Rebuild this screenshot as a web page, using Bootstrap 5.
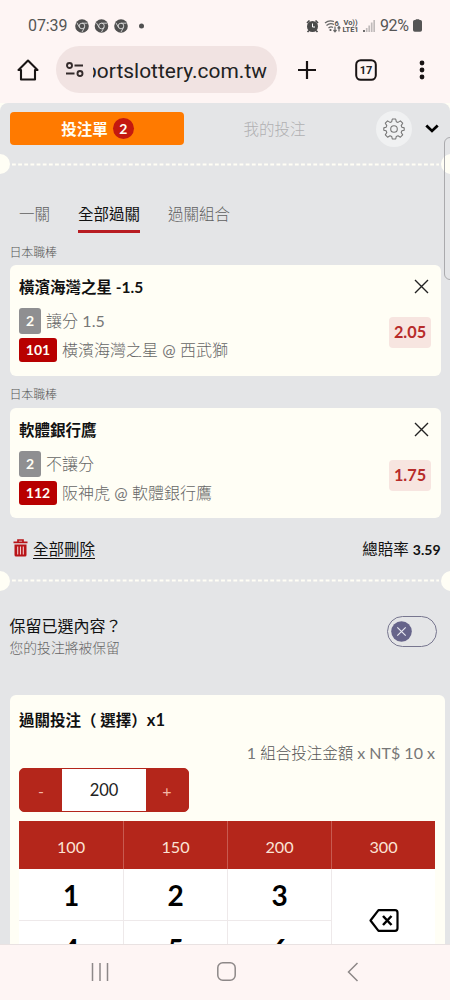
<!DOCTYPE html>
<html lang="zh-Hant">
<head>
<meta charset="utf-8">
<meta name="viewport" content="width=device-width, initial-scale=1">
<title>投注單</title>
<link href="https://cdn.jsdelivr.net/npm/bootstrap@5.3.0/dist/css/bootstrap.min.css" rel="stylesheet">
<style>
html,body{height:1000px;overflow:hidden}
body{font-family:Lato,"Noto Sans CJK TC",sans-serif;background:#fef5f4;color:#111;font-size:15.5px;width:450px}
svg{display:block;flex:none}
.chrome-font{font-family:Roboto,sans-serif}
.statusbar{height:48px;padding:3px 27px 0 28px;color:#555;font-size:16px}
.volte{font-size:7.5px;line-height:7px;font-weight:700;text-align:center;letter-spacing:-.1px}
.urlbar{height:55px;padding:0 15px 12px 17px}
.omni{width:221px;height:47px;background:#f1e3e2;border-radius:24px;padding:0 10px 0 10px;color:#222;font-size:20.9px;overflow:hidden}
.omni-text{width:174px;height:30px;line-height:33px;overflow:hidden;direction:rtl;white-space:nowrap;letter-spacing:.03px}
.slip{height:841px;background:#e4e5e7;border-radius:8px 8px 0 0;overflow:hidden;position:relative}
.slip-wrap{background:#fffef5}
.slip-head{height:51px;padding:0 9px 0 9.5px}
.tab-main{width:174px;height:33px;background:#ff7a00;border-radius:4px;color:#fffef5;font-weight:700}
.count{width:21px;height:21px;border-radius:50%;background:#c4190f;font-size:14px;line-height:21px;text-align:center;font-weight:700}
.tab-other{width:182px;color:#b0b0b2;font-weight:300;padding-top:1px}
.gear{width:36px;height:36px;border-radius:50%;background:#f0f1f2}
.perf{height:20px;margin:0 -11px 0 -10px}
.perf i{width:20px;height:20px;border-radius:50%;background:#fffef5;flex:none}
.perf svg{flex:1 1 0;min-width:0}
.modes{height:66px;padding:30px 19px 0;gap:28px;color:#606060;font-weight:300}
.modes span{height:36px;line-height:32px;white-space:nowrap}
.modes .on{color:#111;font-weight:400;border-bottom:3.5px solid #b81c22;height:35px}
.league{font-size:12px;letter-spacing:-.15px;color:#555;font-weight:300;padding-left:9.5px;height:19px;line-height:20px}
.pick{width:431.5px;height:110.5px;margin-left:9.5px;background:#fffef5;border-radius:6px;padding:9px 10px 0 9.5px}
.pick-title{font-weight:700;color:#111;line-height:26px;height:34px}
.pick-line{color:#666;font-size:16px;font-weight:300;white-space:nowrap}
.pick-line .rg{font-weight:400;color:#777}
.tag{border-radius:3px;color:#fffef5;font-size:14px;font-weight:700;text-align:center}
.tag-g{background:#8f8f91;width:22px;height:26px;line-height:26px}
.tag-r{background:#b80000;width:38px;height:24px;line-height:24px}
.odd{width:42px;height:31px;line-height:30px;background:#f7e5e0;border-radius:4px;color:#b72c2a;font-weight:700;font-size:16.300px;text-align:center}
.sum{height:52.5px;padding:10px 9.5px 0 13px}
.del{text-decoration:underline;text-underline-offset:3px;text-decoration-thickness:1px}
.keep{height:104.5px;padding:24px 13px 0 9.5px}
.switch-box{width:50px;height:31px;border:1px solid #77768f;border-radius:16px;padding-left:3px;margin-top:1px}
.stake{width:435px;height:330px;margin-left:9.5px;background:#fffef5;border-radius:6px 6px 0 0;padding:0 9.5px}
.stepper{width:170px;height:44px;border:1px solid #b4261b;border-radius:5px;background:#b4261b;line-height:43px;overflow:hidden;text-align:center}
.stepper .sg{width:42px;color:#f4b9a8;font-size:16px}
.stepper .num{flex:1;background:#fff;color:#222;font-size:16.5px}
.pad{display:grid;grid-template-columns:105px 104px 104px 103px;grid-template-rows:48px 52px 52px;width:416px;text-align:center;background:#fff}
.pad .q{background:#b4261b;color:#fbe3d5;line-height:52px;font-size:16.200px;border-right:1px solid #c85a50}
.pad .q:nth-child(4){border:0}
.pad .k{color:#000;font-size:28px;font-weight:700;line-height:53px;border-right:1px solid #eee9ea;border-bottom:1px solid #eee9ea}
.pad .bk{grid-row:span 2}
.pad .bk ~ .k{line-height:56px}
.handle{position:absolute;right:-6px;top:34px;width:12px;height:143px;border:1px solid #aaaaad;border-radius:6px;background:transparent}
.sysnav{height:56px;padding:0 91px 2px;border-top:1px solid #e9e2e2}
</style>
</head>
<body>
<div class="statusbar chrome-font d-flex align-items-center justify-content-between">
  <div class="d-flex align-items-center">
    <span style="width:47px;letter-spacing:-.1px">07:39</span>
    <svg width="72" height="16" viewBox="0 0 72 16">
      <defs><g id="chr"><circle cx="7" cy="8" r="6.800" fill="#505050"/><g stroke="#ddd" stroke-width=".9" fill="none"><circle cx="7" cy="8" r="2.800"/><path d="M7 5.200h5.500M4.600 9.500L1.900 4.800M9.500 9.400L7 14"/></g></g></defs>
      <use href="#chr"/><use href="#chr" x="19.500"/><use href="#chr" x="39"/><circle cx="66.500" cy="8" r="2.500" fill="#505050"/>
    </svg>
  </div>
  <div class="d-flex align-items-center">
    <svg style="margin-right:-1px" width="13" height="14" viewBox="0 0 13 14"><circle cx="6.500" cy="7.500" r="5.500" fill="#4a4a4a"/><path d="M1 4l2.500-2.500M12 4L9.500 1.500M3 11.500L1.500 13M10 11.500l1.500 1.500" stroke="#4a4a4a" stroke-width="1.700"/><path d="M6.500 4.500v3.500H9" stroke="#fff" fill="none"/></svg>
    <svg style="margin-left:6px" width="17" height="14" viewBox="0 0 17 14"><g fill="none" stroke="#666" stroke-width="1.200"><path d="M1 4Q5 .5 10 2.500M2.500 6.500Q6 3.500 10 5.500M4.500 9Q7 7 9 8.500"/><path d="M11 7.500v5M9.500 11l1.500 1.800 1.500-1.800M15 12.500v-5M13.600 9.300L15 7.500l1.400 1.800"/></g><circle cx="6.500" cy="11" r="1.100" fill="#555"/><text x="10.500" y="6.500" font-size="7.500" font-weight="700" fill="#555">6</text></svg>
    <span class="volte" style="margin-left:1px;width:17px">Vo))<br>LTE1</span>
    <svg class="mx-1" width="12" height="13" viewBox="0 0 12 13"><path d="M1 11v2" stroke="#555" stroke-width="1.700"/><path d="M3.700 9v4M6.200 6.500V13M8.700 3.500V13M11.200 1v12" stroke="#c0bbbb" stroke-width="1.700"/></svg>
    <span style="letter-spacing:-.4px;margin-left:1px;width:33px">92%</span>
    <svg style="margin-right:1px" width="9" height="13" viewBox="0 0 10 14"><path d="M3 0h4v1h1.200Q10 1 10 2.800V12q0 2-2 2H2q-2 0-2-2V2.800Q0 1 1.800 1H3z" fill="#555"/></svg>
  </div>
</div>
<div class="urlbar d-flex align-items-center">
  <svg width="22" height="24" viewBox="0 0 22 24" fill="none" stroke="#191414" stroke-width="2.100" stroke-linejoin="round"><path d="M1.500 12L11 2.500l9.500 9.500H18v9.500H4V12z"/></svg>
  <div class="omni chrome-font d-flex align-items-center" style="margin-left:17px">
    <svg width="20" height="18" viewBox="0 0 20 18" fill="none" stroke="#332b2b" stroke-width="1.900"><circle cx="3.500" cy="4.500" r="2.500"/><path d="M8.500 4.500H17M0 12.500h8.500"/><circle cx="14" cy="12.500" r="2.500"/></svg>
    <div class="omni-text" style="margin-left:7px"><bdi dir="ltr">sportslottery.com.tw</bdi></div>
  </div>
  <svg style="margin-left:20px" width="20" height="20" viewBox="0 0 20 20"><path d="M10 1v18M1 10h18" stroke="#191414" stroke-width="2.200"/></svg>
  <svg style="margin-left:38px" width="22" height="22" viewBox="0 0 22 22"><rect x="1.200" y="1.200" width="19.600" height="19.600" rx="4.500" fill="none" stroke="#191414" stroke-width="2"/><text x="11" y="15" text-anchor="middle" font-size="11" font-weight="700" font-family="Roboto" fill="#222">17</text></svg>
  <svg style="margin-left:42px" width="6" height="22" viewBox="0 0 6 22" fill="#191414"><circle cx="3" cy="4" r="2.400"/><circle cx="3" cy="11" r="2.400"/><circle cx="3" cy="18" r="2.400"/></svg>
</div>
<div class="slip-wrap"><main class="slip">
  <div class="slip-head d-flex align-items-center">
    <div class="tab-main d-flex align-items-center justify-content-center"><span style="padding:2px 0 0 2px">投注單</span><span class="count" style="margin-left:5px">2</span></div>
    <div class="tab-other text-center" style="padding-top:3px">我的投注</div>
    <div class="gear d-flex align-items-center justify-content-center" style="margin-left:10px"><svg width="22" height="22" viewBox="0 0 22 22" fill="none" stroke="#777" stroke-width="1.100" stroke-linejoin="round"><circle cx="11" cy="11" r="3.300"/><path d="M9.300 1h3.400l.6 2.700 1.700.7 2.400-1.500 2.300 2.300-1.500 2.400.7 1.700 2.300.6v2.300l-2.300.6-.7 1.700 1.500 2.400-2.300 2.300-2.400-1.500-1.700.7-.6 2.600H9.300l-.6-2.600-1.700-.7-2.400 1.500-2.300-2.300 1.500-2.400-.7-1.700L.8 12.200V9.900l2.300-.6.7-1.700-1.500-2.400 2.300-2.300L7 4.400l1.700-.7z"/></svg></div>
    <svg style="margin-left:13px" width="14" height="9" viewBox="0 0 14 9"><path d="M1.300 1.500L7 6.900l5.700-5.400" fill="none" stroke="#000" stroke-width="2.800"/></svg>
  </div>
  <div class="perf d-flex align-items-center"><i></i><svg height="3" width="428"><path d="M2 1.500h427" stroke="#fffef5" stroke-width="2.200" stroke-dasharray="3.800 2.350"/></svg><i></i></div>
  <div class="modes d-flex" style="margin-top:-6px"><span>一關</span><span class="on">全部過關</span><span>過關組合</span></div>
  <div class="league" style="margin-top:9px">日本職棒</div>
  <section class="pick" style="margin-top:3px">
    <div class="d-flex justify-content-between"><div class="pick-title">橫濱海灣之星 -1.5</div><svg style="margin:5px 2px 0 0" width="15" height="15" viewBox="0 0 15 15"><path d="M1 1l13 13M14 1L1 14" stroke="#222" stroke-width="1.400"/></svg></div>
    <div class="d-flex justify-content-between align-items-center" style="height:54px">
      <div><div class="pick-line d-flex align-items-center"><span class="tag tag-g">2</span><span style="margin-left:5px">讓分 <span class="rg">1.5</span></span></div>
      <div class="pick-line d-flex align-items-center" style="margin-top:4px"><span class="tag tag-r">101</span><span style="margin-left:5px">橫濱海灣之星 <span class="rg">@</span> 西武獅</span></div></div>
      <span class="odd" style="margin-top:-5px">2.05</span>
    </div>
  </section>
  <div class="league" style="margin-top:9.500px">日本職棒</div>
  <section class="pick" style="margin-top:3.500px">
    <div class="d-flex justify-content-between"><div class="pick-title">軟體銀行鷹</div><svg style="margin:5px 2px 0 0" width="15" height="15" viewBox="0 0 15 15"><path d="M1 1l13 13M14 1L1 14" stroke="#222" stroke-width="1.400"/></svg></div>
    <div class="d-flex justify-content-between align-items-center" style="height:54px">
      <div><div class="pick-line d-flex align-items-center"><span class="tag tag-g">2</span><span style="margin-left:5px">不讓分</span></div>
      <div class="pick-line d-flex align-items-center" style="margin-top:4px"><span class="tag tag-r">112</span><span style="margin-left:5px">阪神虎 <span class="rg">@</span> 軟體銀行鷹</span></div></div>
      <span class="odd" style="margin-top:-5px">1.75</span>
    </div>
  </section>
  <div class="sum d-flex align-items-center justify-content-between">
    <div class="d-flex align-items-center"><svg style="margin-top:-2px" width="15" height="18" viewBox="0 0 15 18"><path d="M.5 3.300h14M5 3V1h5v2" fill="none" stroke="#b81418" stroke-width="1.700"/><path d="M1.500 5.500h12V16q0 1.500-1.500 1.500H3Q1.500 17.500 1.500 16z" fill="#b81418"/><path d="M4.700 7.500v8M7.500 7.500v8M10.300 7.500v8" stroke="#f0cccd" stroke-width="1.100"/></svg><span class="del" style="margin-left:5px">全部刪除</span></div>
    <div>總賠率 <b style="font-size:14px">3.59</b></div>
  </div>
  <div class="perf d-flex align-items-center"><i></i><svg height="3" width="428"><path d="M2 1.500h427" stroke="#fffef5" stroke-width="2.200" stroke-dasharray="3.800 2.350"/></svg><i></i></div>
  <div class="keep d-flex justify-content-between">
    <div><div style="font-size:16px;line-height:22px">保留已選內容？</div><div style="font-size:13.800px;line-height:22px;color:#666;font-weight:300">您的投注將被保留</div></div>
    <div class="switch-box d-flex align-items-center"><svg width="21" height="21" viewBox="0 0 21 21"><circle cx="10.500" cy="10.500" r="10.300" fill="#66648a"/><path d="M6.300 6.300l8.400 8.400M14.700 6.300l-8.400 8.400" stroke="#e8e8f0" stroke-width="1.200"/></svg></div>
  </div>
  <section class="stake">
    <div class="fw-bold" style="height:42px;line-height:51px">過關投注（ 選擇）<span style="font-size:16.500px">x1</span></div>
    <div class="text-end" style="height:31px;line-height:31px;color:#777;font-size:16px"><span>1</span> <span style="font-weight:300;font-size:15.500px;color:#555">組合投注金額</span> x NT$ 10 x</div>
    <div class="stepper d-flex"><span class="sg">-</span><span class="num">200</span><span class="sg">+</span></div>
    <div class="pad" style="margin-top:9px">
      <div class="q">100</div><div class="q">150</div><div class="q">200</div><div class="q">300</div>
      <div class="k">1</div><div class="k">2</div><div class="k">3</div>
      <div class="bk d-flex align-items-center justify-content-center" style="padding:0 0 2px 1px"><svg width="30" height="23" viewBox="0 0 30 23" fill="none" stroke="#000" stroke-width="2.200" stroke-linejoin="round"><path d="M9.500 1.200H26q2.500 0 2.500 2.500v15.600q0 2.500-2.500 2.500H9.500L1.500 11.500z"/><path d="M14 7l8.500 9M22.500 7L14 16" stroke-width="2.500"/></svg></div>
      <div class="k">4</div><div class="k">5</div><div class="k">6</div>
    </div>
  </section>
  <div class="handle"></div>
</main></div>
<nav class="sysnav d-flex align-items-center justify-content-between">
  <svg width="18" height="18" viewBox="0 0 18 18"><path d="M1.500 0v18M9 0v18M16.500 0v18" stroke="#8d8888" stroke-width="1.500"/></svg>
  <svg style="margin-right:4px" width="19" height="19" viewBox="0 0 19 19"><rect x=".8" y=".8" width="17.400" height="17.400" rx="5" fill="none" stroke="#8d8888" stroke-width="1.500"/></svg>
  <svg width="12" height="20" viewBox="0 0 12 20"><path d="M10.500 1L1.500 10l9 9" fill="none" stroke="#8d8888" stroke-width="1.500"/></svg>
</nav>
<script src="https://cdn.jsdelivr.net/npm/bootstrap@5.3.0/dist/js/bootstrap.bundle.min.js"></script>
</body>
</html>
